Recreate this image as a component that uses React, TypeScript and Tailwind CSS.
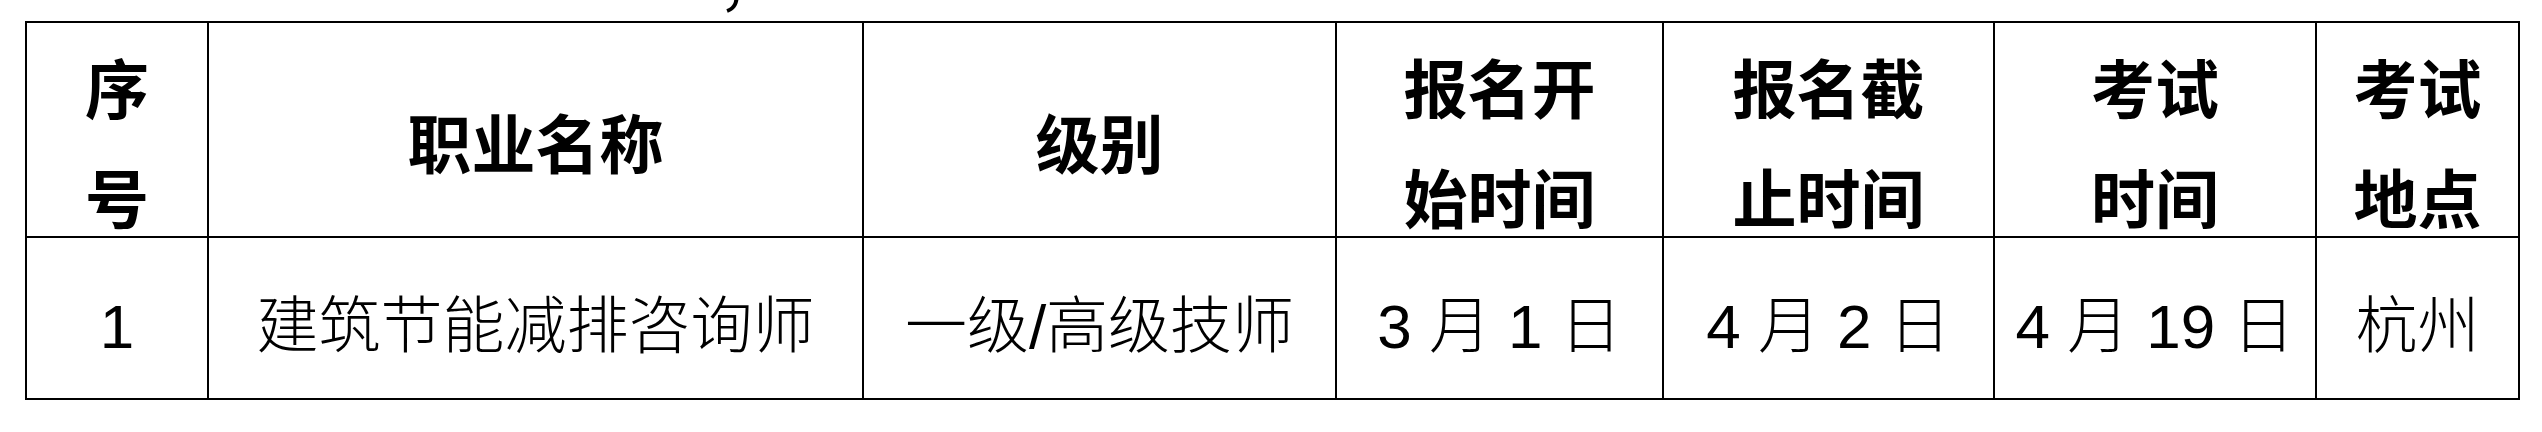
import React from 'react';

const headers: React.ReactNode[] = [
  <>序<br />号</>,
  '职业名称',
  '级别',
  <>报名开<br />始时间</>,
  <>报名截<br />止时间</>,
  <>考试<br />时间</>,
  <>考试<br />地点</>,
];

const row = ['1', '建筑节能减排咨询师', '一级/高级技师', '3 月 1 日', '4 月 2 日', '4 月 19 日', '杭州'];

const App: React.FC = () => {
  return (
    <div className="w-[2542px] h-[432px] bg-white text-black">
      {/* tail of the line above, cut off by the crop */}
      <div className="h-[21px] overflow-hidden pl-[718px]">
        <span className="block -mt-[52px] text-[62px] leading-[62px] font-['Noto_Sans_CJK_SC',sans-serif]">，</span>
      </div>

      <div className="ml-[25px] w-[2495px] grid grid-cols-[182px_655px_473px_327px_331px_322px_203px] grid-rows-[215px_162px] border-l-2 border-t-2 border-black">
        {headers.map((h, i) => (
          <div
            key={i}
            className="border-r-2 border-b-2 border-black flex items-center justify-center pt-[20px] text-center text-[64px] leading-[110px] font-bold font-['Noto_Sans_CJK_SC',sans-serif]"
          >
            <div>{h}</div>
          </div>
        ))}
        {row.map((t, i) => (
          <div
            key={i}
            className="border-r-2 border-b-2 border-black flex items-center justify-center pt-[18px] text-center whitespace-pre text-[62px] leading-none font-light font-['Liberation_Sans','Noto_Sans_CJK_SC',sans-serif]"
          >
            {t}
          </div>
        ))}
      </div>
    </div>
  );
};

export default App;
